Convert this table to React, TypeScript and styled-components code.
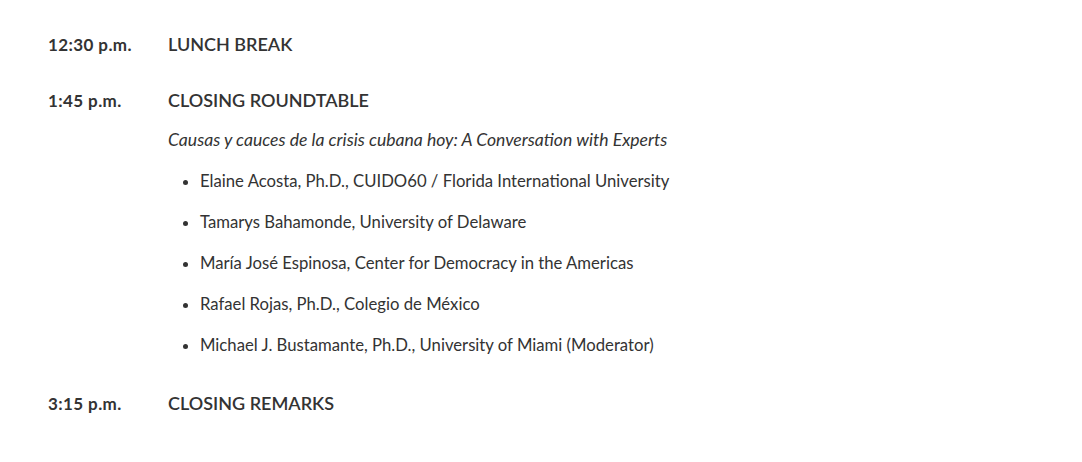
import React from 'react'
import styled, {createGlobalStyle} from 'styled-components'

const GlobalStyle = createGlobalStyle`
  body {
    margin: 0;
    background: #ffffff;
    font-family: Lato, "Noto Sans", sans-serif;
    color: #333333;
  }
`

const schedule = [
  {time: '12:30 p.m.', title: 'LUNCH BREAK'},
  {
    time: '1:45 p.m.',
    title: 'CLOSING ROUNDTABLE',
    subtitle: 'Causas y cauces de la crisis cubana hoy: A Conversation with Experts',
    people: [
      'Elaine Acosta, Ph.D., CUIDO60 / Florida International University',
      'Tamarys Bahamonde, University of Delaware',
      'María José Espinosa, Center for Democracy in the Americas',
      'Rafael Rojas, Ph.D., Colegio de México',
      'Michael J. Bustamante, Ph.D., University of Miami (Moderator)',
    ],
  },
  {time: '3:15 p.m.', title: 'CLOSING REMARKS'},
]

const App = () => {
  return (
    <>
      <GlobalStyle />
      <Page>
        {schedule.map((item, index) => (
          <Row key={index}>
            <Time>{item.time}</Time>
            <Details>
              <Title>{item.title}</Title>
              {item.subtitle && <Subtitle>{item.subtitle}</Subtitle>}
              {item.people && (
                <People>
                  {item.people.map((p, i) => (
                    <Person key={i}>{p}</Person>
                  ))}
                </People>
              )}
            </Details>
          </Row>
        ))}
      </Page>
    </>
  )
}

const Page = styled.div`
  display: flex;
  flex-direction: column;
  gap: 32px;
  padding: 32px 48px;
  width: 1082px;
  height: 462px;
  box-sizing: border-box;
`
const Row = styled.div`
  display: grid;
  grid-template-columns: 120px 1fr;
  align-items: baseline;
`
const Time = styled.div`
  font-size: 17px;
  font-weight: 700;
  letter-spacing: 0.4px;
`
const Details = styled.div`
  display: flex;
  flex-direction: column;
`
const Title = styled.div`
  font-size: 18px;
  font-weight: 600;
  line-height: 24px;
`
const Subtitle = styled.div`
  font-size: 17.6px;
  font-style: italic;
  line-height: 24px;
  margin-top: 16px;
`
const People = styled.ul`
  margin: 17px 0 2px;
  padding-left: 32px;
  display: flex;
  flex-direction: column;
  gap: 17px;
`
const Person = styled.li`
  font-size: 16.7px;
  line-height: 24px;
`

export default App
